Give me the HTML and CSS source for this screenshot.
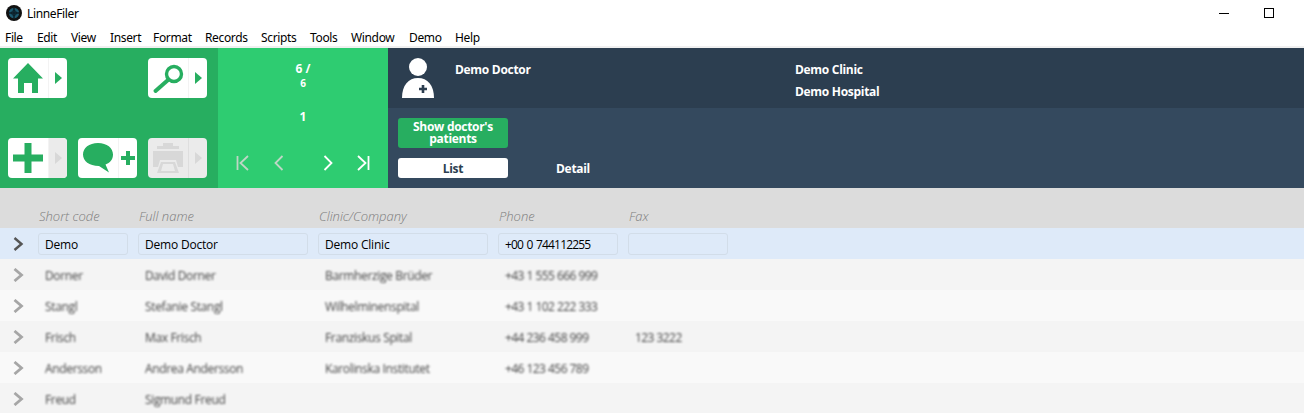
FILE: index.html
```html
<!DOCTYPE html>
<html lang="en">
<head>
    <meta charset="UTF-8">
    <meta name="viewport" content="width=device-width, initial-scale=1.0">
    <title>LinneFiler</title>
    <link rel="stylesheet" href="styles.css">
</head>
<body>

<div class="titlebar">
    <svg class="app-icon" viewBox="0 0 16 16">
        <circle cx="8" cy="8" r="8" fill="#111"/>
        <circle cx="8" cy="8" r="5.2" fill="#1c5a70"/>
        <path d="M8 3v10M3 8h10" stroke="#0b1d26" stroke-width="1.4"/>
        <circle cx="8" cy="8" r="2.4" fill="none" stroke="#0b1d26"/>
    </svg>
    <span class="app-name">LinneFiler</span>
    <span class="win-min"></span>
    <span class="win-max"></span>
</div>

<nav class="menubar">
    <a style="width:32px">File</a>
    <a style="width:34px">Edit</a>
    <a style="width:39px">View</a>
    <a style="width:43px">Insert</a>
    <a style="width:52px">Format</a>
    <a style="width:56px">Records</a>
    <a style="width:49px">Scripts</a>
    <a style="width:41px">Tools</a>
    <a style="width:58px">Window</a>
    <a style="width:46px">Demo</a>
    <a>Help</a>
</nav>

<header class="top">
    <div class="tools">
        <div class="tool">
            <div class="tool-main">
                <svg viewBox="0 0 40 40"><path d="M20 5 L35 20.500 H30 V35 H24 V25 H16 V35 H10 V20.500 H5 Z" fill="#27ae60"/></svg>
            </div>
            <div class="tool-side"><span class="tri"></span></div>
        </div>
        <div class="tool-gap"></div>
        <div class="tool">
            <div class="tool-main">
                <svg viewBox="0 0 40 40"><circle cx="26" cy="16" r="7.500" fill="none" stroke="#27ae60" stroke-width="3.400"/><path d="M20 22 L7.500 33" stroke="#27ae60" stroke-width="4" stroke-linecap="round"/></svg>
            </div>
            <div class="tool-side"><span class="tri"></span></div>
        </div>
        <div class="tool">
            <div class="tool-main">
                <svg viewBox="0 0 40 40"><path d="M16.500 5 H23.500 V16.500 H35 V23.500 H23.500 V35 H16.500 V23.500 H5 V16.500 H16.500 Z" fill="#27ae60"/></svg>
            </div>
            <div class="tool-side off"><span class="tri off"></span></div>
        </div>
        <div class="tool">
            <div class="tool-main">
                <svg viewBox="0 0 40 40"><path d="M20 5 C29 5 35 10 35 16.500 C35 21.500 32 25 27.500 26.500 L31 34.500 L21 28 C11 28 5 23 5 16.500 C5 10 11 5 20 5 Z" fill="#27ae60"/></svg>
            </div>
            <div class="tool-side"><span class="plus"></span></div>
        </div>
        <div class="tool disabled">
            <div class="tool-main">
                <svg viewBox="0 0 40 40"><path d="M15 5 H25 V8 H31 V11 H9 V8 H15 Z M5 13 H35 V29 H30 L28 22 H12 L10 29 H5 Z M13 24 H27 L31 35 H9 Z M15 26 L13 33 H27 L25 26 Z" fill="#d8d8d8" fill-rule="evenodd"/></svg>
            </div>
            <div class="tool-side"><span class="tri off"></span></div>
        </div>
    </div>

    <div class="pager">
        <div class="pager-found">6 /</div>
        <div class="pager-total">6</div>
        <div class="pager-current">1</div>
        <div class="pager-arrows">
            <svg viewBox="0 0 16 16"><path d="M2.500 1 V15 M13 1 L5.500 8 L13 15" fill="none" stroke="#bfd6c6" stroke-width="1.800"/></svg>
            <svg class="gap-first" viewBox="0 0 16 16"><path d="M11.500 1 L4.500 8 L11.500 15" fill="none" stroke="#bfd6c6" stroke-width="1.800"/></svg>
            <svg class="gap-mid" viewBox="0 0 16 16"><path d="M4.500 1 L11.500 8 L4.500 15" fill="none" stroke="#fff" stroke-width="1.800"/></svg>
            <svg class="gap-last" viewBox="0 0 16 16"><path d="M3 1 L10.500 8 L3 15 M13.500 1 V15" fill="none" stroke="#fff" stroke-width="1.800"/></svg>
        </div>
    </div>

    <div class="doctor">
        <div class="doctor-head">
            <svg class="doctor-icon" viewBox="0 0 35 40">
                <circle cx="18" cy="9" r="9" fill="#fff"/>
                <path d="M2 40 C2 27 8.500 20 18 20 C27.500 20 34 27 34 40 Z" fill="#fff"/>
                <path d="M19 31 H27 M23 27 V35" stroke="#2c3e50" stroke-width="2.600"/>
            </svg>
            <div class="doctor-name">Demo Doctor</div>
            <div class="doctor-place">
                <div>Demo Clinic</div>
                <div>Demo Hospital</div>
            </div>
        </div>
        <div class="doctor-body">
            <button class="btn-patients">Show doctor's patients</button>
            <div class="tabs">
                <div class="tab active">List</div>
                <div class="tab">Detail</div>
            </div>
        </div>
    </div>
</header>

<main>
    <div class="row head">
        <div class="arrow"></div>
        <div class="c1">Short code</div>
        <div class="c2">Full name</div>
        <div class="c3">Clinic/Company</div>
        <div class="c4">Phone</div>
        <div class="c5">Fax</div>
    </div>
    <div class="row current">
        <div class="arrow"><svg viewBox="0 0 12 14"><path d="M2.500 1 L9.500 7 L2.500 13" fill="none" stroke="#555" stroke-width="2.400"/></svg></div>
        <div class="c1 field">Demo</div>
        <div class="c2 field">Demo Doctor</div>
        <div class="c3 field">Demo Clinic</div>
        <div class="c4 field num">+00 0 744112255</div>
        <div class="c5 field"></div>
    </div>
    <div class="row item even">
        <div class="arrow"><svg viewBox="0 0 12 14"><path d="M2.500 1 L9.500 7 L2.500 13" fill="none" stroke="#a6a6a6" stroke-width="2.800"/></svg></div>
        <div class="c1">Dorner</div>
        <div class="c2">David Dorner</div>
        <div class="c3">Barmherzige Brüder</div>
        <div class="c4 num">+43 1 555 666 999</div>
        <div class="c5"></div>
    </div>
    <div class="row item">
        <div class="arrow"><svg viewBox="0 0 12 14"><path d="M2.500 1 L9.500 7 L2.500 13" fill="none" stroke="#a6a6a6" stroke-width="2.800"/></svg></div>
        <div class="c1">Stangl</div>
        <div class="c2">Stefanie Stangl</div>
        <div class="c3">Wilhelminenspital</div>
        <div class="c4 num">+43 1 102 222 333</div>
        <div class="c5"></div>
    </div>
    <div class="row item even">
        <div class="arrow"><svg viewBox="0 0 12 14"><path d="M2.500 1 L9.500 7 L2.500 13" fill="none" stroke="#a6a6a6" stroke-width="2.800"/></svg></div>
        <div class="c1">Frisch</div>
        <div class="c2">Max Frisch</div>
        <div class="c3">Franziskus Spital</div>
        <div class="c4 num">+44 236 458 999</div>
        <div class="c5 num">123 3222</div>
    </div>
    <div class="row item">
        <div class="arrow"><svg viewBox="0 0 12 14"><path d="M2.500 1 L9.500 7 L2.500 13" fill="none" stroke="#a6a6a6" stroke-width="2.800"/></svg></div>
        <div class="c1">Andersson</div>
        <div class="c2">Andrea Andersson</div>
        <div class="c3">Karolinska Institutet</div>
        <div class="c4 num">+46 123 456 789</div>
        <div class="c5"></div>
    </div>
    <div class="row item even">
        <div class="arrow"><svg viewBox="0 0 12 14"><path d="M2.500 1 L9.500 7 L2.500 13" fill="none" stroke="#a6a6a6" stroke-width="2.800"/></svg></div>
        <div class="c1">Freud</div>
        <div class="c2">Sigmund Freud</div>
        <div class="c3"></div>
        <div class="c4"></div>
        <div class="c5"></div>
    </div>
</main>

</body>
</html>
```

FILE: styles.css
```css
html, body {
    height: 413px;
    overflow: hidden;
}
body {
    margin: 0;
    background: #fff;
    font-family: "Open Sans", Arial, sans-serif;
    font-size: 12px;
    color: #000;
}

/* window chrome */
.titlebar {
    height: 28px;
    display: flex;
    align-items: center;
    padding-left: 6px;
    padding-bottom: 2px;
    box-sizing: border-box;
}
.app-icon {
    width: 16px;
    height: 16px;
}
.app-name {
    margin-left: 5px;
    flex: 1;
    font-family: "Noto Sans", Arial, sans-serif;
    letter-spacing: -0.35px;
}
.win-min {
    width: 10px;
    height: 1px;
    background: #000;
    margin-right: 35px;
}
.win-max {
    width: 8px;
    height: 8px;
    border: 1px solid #000;
    margin-right: 30px;
}
.menubar {
    height: 18px;
    padding-left: 5px;
    padding-top: 1px;
    display: flex;
    align-items: center;
    border-bottom: 2px solid #f0f0f0;
    margin-top: -1px;
    font-family: "Noto Sans", Arial, sans-serif;
    letter-spacing: -0.35px;
}

/* top panels */
.top {
    display: flex;
    height: 140px;
}
.tools {
    width: 218px;
    box-sizing: border-box;
    background: #27ae60;
    padding: 10px 11px 10px 8px;
    display: grid;
    grid-template-columns: 59px 59px 59px;
    grid-template-rows: 40px 40px;
    column-gap: 11px;
    row-gap: 40px;
}
.tool {
    display: flex;
    background: #fff;
    border-radius: 4px;
    overflow: hidden;
}
.tool-gap {
    background: none;
}
.tool-main {
    width: 40px;
    height: 40px;
}
.tool-main svg {
    width: 40px;
    height: 40px;
    display: block;
}
.tool-side {
    flex: 1;
    display: flex;
    align-items: center;
    justify-content: center;
    border-left: 1px solid #f3f3f3;
}
.tool-side.off {
    background: #ebebeb;
}
.tool.disabled {
    background: #ebebeb;
}
.tool.disabled .tool-side {
    border-left-color: #dedede;
}
.tri {
    width: 0;
    height: 0;
    border-left: 7px solid #27ae60;
    border-top: 6px solid transparent;
    border-bottom: 6px solid transparent;
}
.tri.off {
    border-left-color: #d8d8d8;
}
.plus {
    width: 14px;
    height: 14px;
    background:
        linear-gradient(#27ae60, #27ae60) center / 14px 4px no-repeat,
        linear-gradient(#27ae60, #27ae60) center / 4px 14px no-repeat;
}

.pager {
    width: 170px;
    background: #2ecc71;
    color: #fff;
    font-weight: 700;
    text-align: center;
}
.pager-found {
    margin-top: 12px;
    line-height: 17px;
}
.pager-total {
    font-size: 10px;
    line-height: 12px;
}
.pager-current {
    margin-top: 19px;
    line-height: 17px;
}
.pager-arrows {
    margin-top: 30px;
    padding-left: 17px;
    display: flex;
}
.pager-arrows svg {
    width: 16px;
    height: 16px;
}
.gap-first { margin-left: 20px; }
.gap-mid { margin-left: 33px; }
.gap-last { margin-left: 19px; }

.doctor {
    flex: 1;
    background: #34495e;
    color: #fff;
    font-weight: 700;
    letter-spacing: -0.3px;
}
.doctor-head {
    height: 60px;
    background: #2c3e50;
    display: flex;
    padding: 10px 0 0 12px;
    box-sizing: border-box;
}
.doctor-icon {
    width: 35px;
    height: 40px;
}
.doctor-name {
    width: 340px;
    margin-left: 20px;
    line-height: 24px;
}
.doctor-place {
    line-height: 22px;
    margin-top: 1px;
}
.doctor-body {
    padding: 10px 0 0 10px;
}
.btn-patients {
    display: block;
    width: 110px;
    height: 30px;
    padding: 0 10px;
    background: #27ae60;
    color: #fff;
    border: none;
    border-radius: 3px;
    font: inherit;
    letter-spacing: inherit;
    line-height: 12px;
}
.tabs {
    display: flex;
    margin-top: 10px;
}
.tab {
    width: 110px;
    height: 20px;
    line-height: 21px;
    text-align: center;
    border-radius: 3px;
    margin-right: 10px;
}
.tab.active {
    background: #fff;
    color: #2c3e50;
}

/* table */
.row {
    display: flex;
    column-gap: 10px;
    height: 31px;
    align-items: center;
}
.arrow {
    width: 28px;
    display: flex;
    justify-content: flex-end;
}
.arrow svg {
    width: 12px;
    height: 14px;
    margin-right: 4px;
    display: block;
}
.c1 { width: 90px; }
.c2 { width: 170px; }
.c3 { width: 170px; }
.c4 { width: 120px; }
.c5 { width: 100px; }

.row.head {
    height: 40px;
    background: #dcdcdc;
    color: #7c7c7c;
    font-size: 13px;
    font-weight: 300;
    font-style: italic;
    align-items: flex-end;
    padding-bottom: 3px;
    box-sizing: border-box;
}
.row.head > div {
    padding-left: 1px;
    box-sizing: border-box;
}
.row.current {
    background: #deeaf9;
    letter-spacing: -0.2px;
}
.field {
    height: 22px;
    line-height: 22px;
    box-sizing: border-box;
    padding-left: 6px;
    border: 1px solid #d2dde9;
    border-radius: 3px;
}
.row.current .num {
    letter-spacing: -0.8px;
    word-spacing: 1px;
}
.row.item {
    background: #f9f9f9;
    color: #444;
    letter-spacing: -0.35px;
}
.row.item.even {
    background: #f4f4f4;
}
.row.item .arrow svg {
    filter: blur(0.5px);
}
.row.item > div:not(.arrow) {
    padding: 2px 0 0 7px;
    box-sizing: border-box;
    filter: blur(1.2px);
}
.row.item .num {
    letter-spacing: -0.55px;
}
```
